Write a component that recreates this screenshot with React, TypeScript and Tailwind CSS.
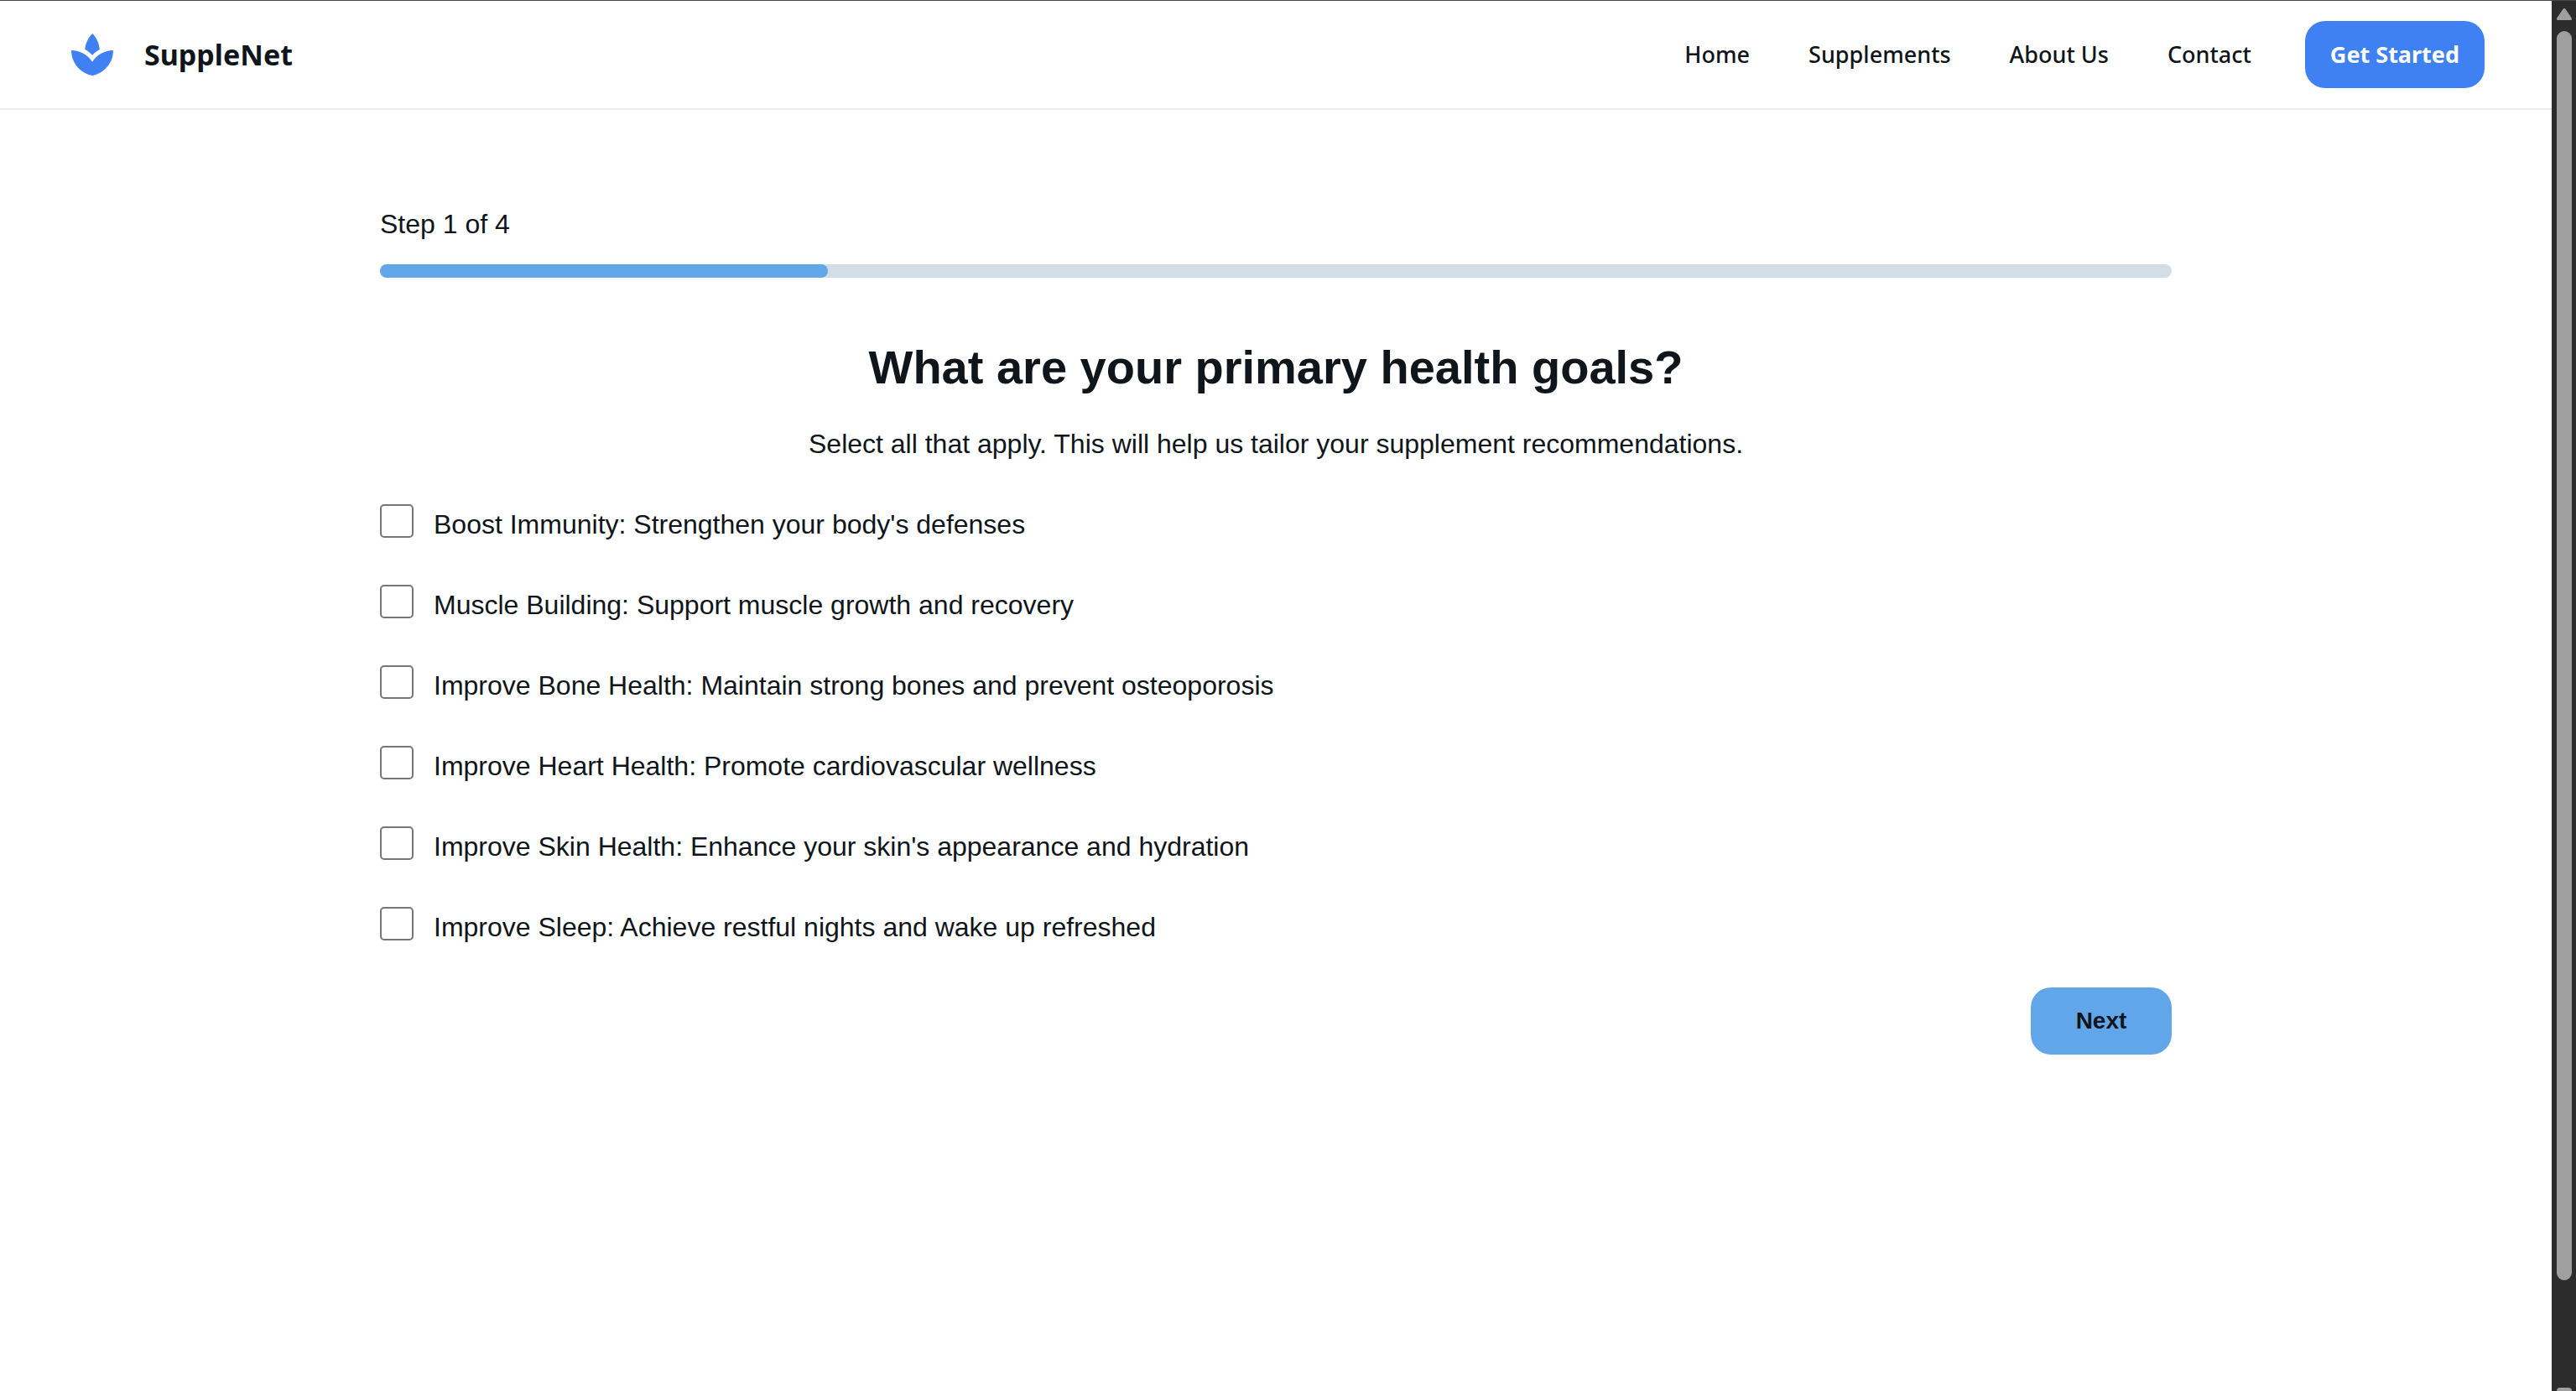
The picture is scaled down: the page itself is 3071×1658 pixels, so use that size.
const NAV_LINKS = ['Home', 'Supplements', 'About Us', 'Contact'];

const GOALS = [
  { id: 'immunity', label: "Boost Immunity: Strengthen your body's defenses" },
  { id: 'muscle', label: 'Muscle Building: Support muscle growth and recovery' },
  { id: 'bone', label: 'Improve Bone Health: Maintain strong bones and prevent osteoporosis' },
  { id: 'heart', label: 'Improve Heart Health: Promote cardiovascular wellness' },
  { id: 'skin', label: "Improve Skin Health: Enhance your skin's appearance and hydration" },
  { id: 'sleep', label: 'Improve Sleep: Achieve restful nights and wake up refreshed' },
];

function LotusLogo() {
  return (
    <svg viewBox="0 0 24 24" className="size-[60px] text-[#3f80f2]" fill="currentColor" aria-hidden="true">
      <path d="M15.49 9.63c-.18-2.79-1.31-5.51-3.43-7.63-2.14 2.14-3.32 4.86-3.55 7.63 1.28.68 2.46 1.56 3.49 2.63 1.03-1.06 2.21-1.94 3.49-2.63zM12 15.45C9.85 12.17 6.18 10 2 10c0 5.32 3.36 9.82 8.03 11.49.63.23 1.29.4 1.97.51.68-.12 1.33-.29 1.97-.51C18.64 19.82 22 15.32 22 10c-4.18 0-7.85 2.17-10 5.45z" />
    </svg>
  );
}

function Header() {
  return (
    <header className="flex items-center justify-between border-b-2 border-[#e5ebf2] px-20 py-6 font-['Noto_Sans',sans-serif]">
      <a href="#" className="flex items-center gap-8">
        <LotusLogo />
        <span className="text-[34px] leading-[46px] font-bold">SuppleNet</span>
      </a>
      <div className="flex items-center gap-16">
        <nav className="flex items-center gap-[70px]">
          {NAV_LINKS.map((name) => (
            <a key={name} href="#" className="text-[27px] leading-10 font-medium">
              {name}
            </a>
          ))}
        </nav>
        <button type="button" className="h-20 rounded-3xl bg-[#3f80f2] px-[30px] text-[27px] leading-10 font-bold text-white">
          Get Started
        </button>
      </div>
    </header>
  );
}

function Progress({ step, total }: { step: number; total: number }) {
  return (
    <div className="flex flex-col gap-6">
      <p id="step" className="leading-[48px]">
        Step {step} of {total}
      </p>
      <div
        role="progressbar"
        aria-labelledby="step"
        aria-valuemin={0}
        aria-valuemax={total}
        aria-valuenow={step}
        className="h-4 rounded-lg bg-[#d3dde6]"
      >
        <div className="h-4 rounded-lg bg-[#62a6ea]" style={{ width: `${(step / total) * 100}%` }} />
      </div>
    </div>
  );
}

function Scrollbar() {
  return (
    <div className="flex w-[29px] shrink-0 flex-col items-center bg-[#2c2c2c] pt-[9px]" aria-hidden="true">
      <svg viewBox="0 0 18 14" className="h-3.5 w-[18px] shrink-0" fill="#9f9f9f">
        <path d="M7.4.9C8.2-.3 9.8-.3 10.6.9L17.6 11.2C18.4 12.5 17.8 14 16.4 14H1.6C.2 14-.4 12.5.4 11.2Z" />
      </svg>
      <div className="mt-[13px] mb-32 w-[18px] grow rounded-full bg-[#9f9f9f]" />
      <div className="h-1 w-[18px] shrink-0 rounded-t-sm bg-[#9f9f9f]" />
    </div>
  );
}

export default function App() {
  return (
    <div className="flex h-screen overflow-hidden border-t border-[#474747] bg-white font-['Liberation_Sans',Arial,sans-serif] text-[32px] text-[#0f151b]">
      <div className="min-w-0 grow">
        <Header />
        <main className="mx-auto w-full max-w-[2136px] pt-28">
          <Progress step={1} total={4} />
          <form onSubmit={(e) => e.preventDefault()}>
            <h1 className="mt-[72px] text-center text-[56px] leading-[70px] font-bold">
              What are your primary health goals?
            </h1>
            <p className="mt-8 mb-6 text-center leading-[48px]">
              Select all that apply. This will help us tailor your supplement recommendations.
            </p>
            {GOALS.map((goal) => (
              <label key={goal.id} className="flex items-start gap-6 py-6 leading-[48px]">
                <input
                  type="checkbox"
                  name={goal.id}
                  className="size-10 shrink-0 appearance-none rounded-[5px] border-2 border-[#767676] bg-white checked:bg-[#3f80f2]"
                />
                <span>{goal.label}</span>
              </label>
            ))}
            <div className="mt-6 flex justify-end">
              <button type="submit" className="h-20 w-[168px] rounded-3xl bg-[#62a6ea] text-[28px] leading-10 font-bold">
                Next
              </button>
            </div>
          </form>
        </main>
      </div>
      <Scrollbar />
    </div>
  );
}
